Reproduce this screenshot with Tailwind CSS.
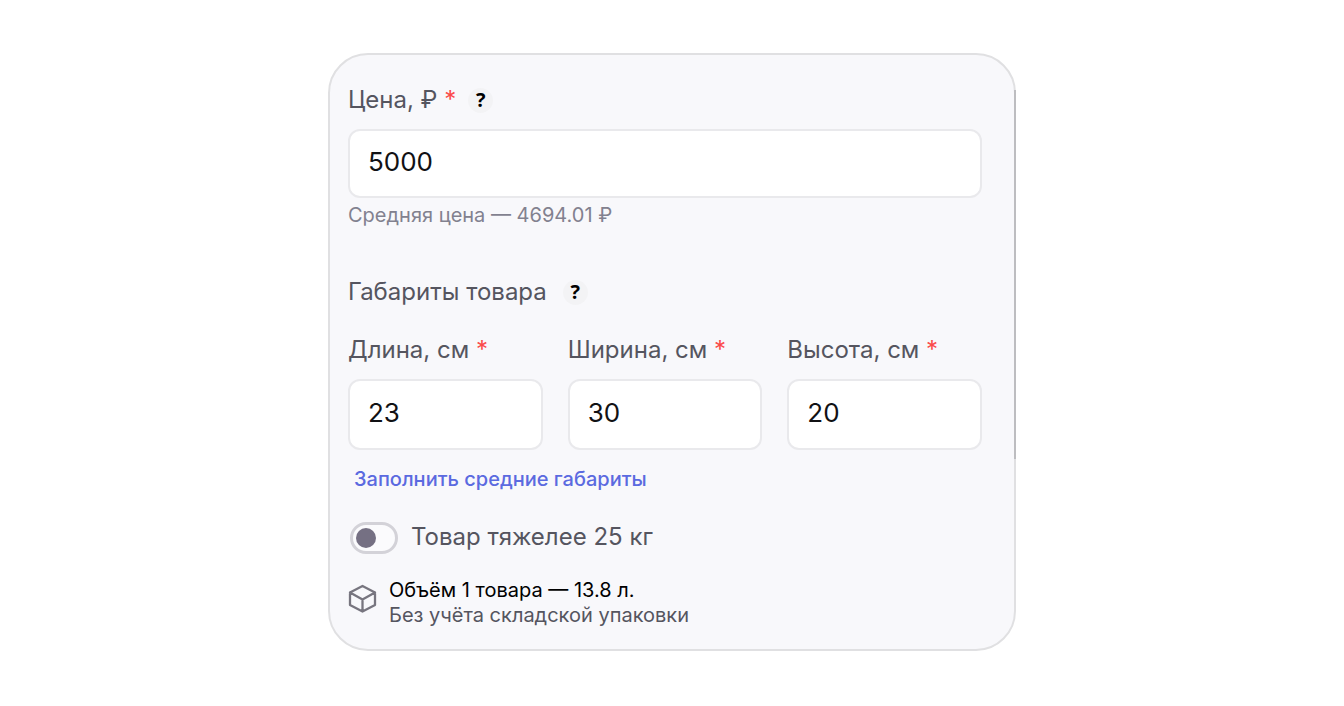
<!DOCTYPE html>
<html lang="ru">
<head>
  <meta charset="UTF-8">
  <meta name="viewport" content="width=device-width, initial-scale=1.0">
  <title>Цена и габариты товара</title>
  <script src="https://cdn.jsdelivr.net/npm/@tailwindcss/browser@4"></script>
</head>
<body class="bg-white font-['Inter','Liberation_Sans',sans-serif] text-[#55555f]">
  <main class="mx-auto max-w-[688px] py-[53px]">
    <form class="relative rounded-[40px] border-2 border-[#e0e0e2] bg-[#f8f8fb] pt-[29px] pr-[32px] pb-[21px] pl-[18px]">
      <!-- Scrollbar thumb -->
      <div class="absolute -right-[2px] top-[35px] h-[369px] w-[2px] bg-[#bdbdc0]"></div>

      <!-- Price -->
      <div class="flex h-8 items-center">
        <label for="price" class="text-2xl">Цена, ₽ <span class="text-[#fb4a4a]">*</span></label>
        <button type="button" aria-label="Подсказка о цене" class="ml-3 h-[25px] w-[25px] rounded-full bg-[#f3f3f5] font-['Open_Sans',sans-serif] text-xl leading-6 font-bold text-black">?</button>
      </div>
      <input id="price" type="text" value="5000" class="mt-[13px] block h-[69px] w-full rounded-xl border-2 border-[#e9e9ec] bg-white px-[18px] pb-1 text-[26px] text-[#111114] outline-none">
      <p class="mt-[5px] text-xl leading-6 text-[#82818f]">Средняя цена — 4694.01 ₽</p>

      <!-- Dimensions -->
      <div class="mt-[49px] flex h-8 items-center">
        <h2 class="text-2xl">Габариты товара</h2>
        <button type="button" aria-label="Подсказка о габаритах" class="ml-4 h-[25px] w-[25px] rounded-full bg-[#f3f3f5] font-['Open_Sans',sans-serif] text-xl leading-6 font-bold text-black">?</button>
      </div>
      <div class="mt-[26px] grid grid-cols-3 gap-[25px]">
        <div>
          <label for="length" class="block text-2xl leading-8 whitespace-nowrap">Длина, см <span class="text-[#fb4a4a]">*</span></label>
          <input id="length" type="text" value="23" class="mt-[13px] block h-[71px] w-full rounded-xl border-2 border-[#e9e9ec] bg-white px-[18px] pb-1 text-[26px] text-[#111114] outline-none">
        </div>
        <div>
          <label for="width" class="block text-2xl leading-8 whitespace-nowrap">Ширина, см <span class="text-[#fb4a4a]">*</span></label>
          <input id="width" type="text" value="30" class="mt-[13px] block h-[71px] w-full rounded-xl border-2 border-[#e9e9ec] bg-white px-[18px] pb-1 text-[26px] text-[#111114] outline-none">
        </div>
        <div>
          <label for="height" class="block text-2xl leading-8 whitespace-nowrap">Высота, см <span class="text-[#fb4a4a]">*</span></label>
          <input id="height" type="text" value="20" class="mt-[13px] block h-[71px] w-full rounded-xl border-2 border-[#e9e9ec] bg-white px-[18px] pb-1 text-[26px] text-[#111114] outline-none">
        </div>
      </div>
      <button type="button" class="mt-[17px] ml-[6px] block text-xl leading-6 font-medium text-[#5b6ae0]">Заполнить средние габариты</button>

      <!-- Heavy item switch -->
      <div class="mt-[31px] flex h-8 items-center">
        <input id="heavy" type="checkbox" role="switch" class="ml-[2px] h-8 w-12 appearance-none rounded-full border-3 border-[#d3d2d8] bg-[#fbfbfd] before:mt-[3px] before:ml-[3px] before:block before:size-5 before:rounded-full before:bg-[#757083]">
        <label for="heavy" class="ml-[13px] pb-[2px] text-2xl">Товар тяжелее 25 кг</label>
      </div>

      <!-- Volume -->
      <div class="mt-6 flex items-center">
        <svg class="mt-[-8px] h-[30px] w-[30px] shrink-0" viewBox="0 0 30 30" fill="none" stroke="#77757f" stroke-width="2.300" stroke-linejoin="round" stroke-linecap="round" aria-hidden="true">
          <path d="M14.500 2 27 8.500v12.500l-12.500 6.500L2 21V8.500zM2 8.500l12.500 7L27 8.500M14.500 15.500v12"/>
        </svg>
        <div class="ml-[11px] text-xl leading-[25px]">
          <p class="text-black">Объём 1 товара — 13.8 л.</p>
          <p>Без учёта складской упаковки</p>
        </div>
      </div>
    </form>
  </main>
</body>
</html>
